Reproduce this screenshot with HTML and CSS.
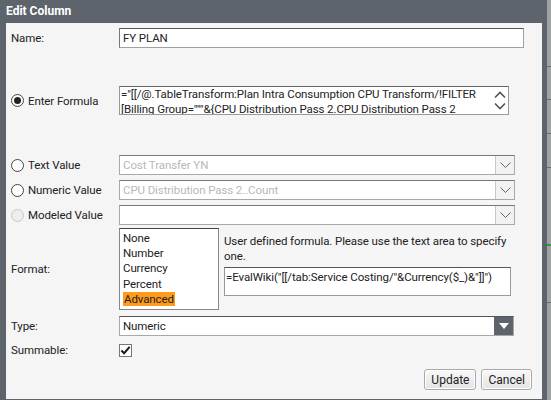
FILE: index.html
```html
<!DOCTYPE html>
<html>
<head>
<meta name="viewport" content="width=device-width, initial-scale=1.0">
<link rel="stylesheet" href="styles.css">
</head>
<body>
<div class="screen">
  <!-- VENTANA EDITAR COLUMNA -->
  <div class="dialog">
    <div class="dialog-title">Edit Column</div>
    <div class="dialog-body">

      <div class="row row-name">
        <span class="label">Name:</span>
        <div class="field field-name">FY PLAN</div>
      </div>

      <div class="row row-formula">
        <span class="label"><span class="radio checked"></span>Enter Formula</span>
        <div class="field field-area">
          <div class="area-text">="[[/@.TableTransform:Plan Intra Consumption CPU Transform/!FILTER<br>[Billing Group="""&amp;{CPU Distribution Pass 2.CPU Distribution Pass 2</div>
          <div class="area-scroll">
            <svg width="12" height="8" viewBox="0 0 12 8"><path d="M1 6.5 L6 1.5 L11 6.5" fill="none" stroke="#555" stroke-width="1.6"/></svg>
            <svg width="12" height="8" viewBox="0 0 12 8"><path d="M1 1.5 L6 6.5 L11 1.5" fill="none" stroke="#555" stroke-width="1.6"/></svg>
          </div>
        </div>
      </div>

      <div class="row row-text">
        <span class="label"><span class="radio"></span>Text Value</span>
        <div class="field field-select">
          <span class="select-text muted">Cost Transfer YN</span>
          <span class="select-arrow"><svg width="11" height="6" viewBox="0 0 11 6"><path d="M0.5 0.5 L5.5 5.5 L10.5 0.5" fill="none" stroke="#666" stroke-width="1"/></svg></span>
        </div>
      </div>

      <div class="row row-sel">
        <span class="label"><span class="radio"></span>Numeric Value</span>
        <div class="field field-select">
          <span class="select-text muted">CPU Distribution Pass 2..Count</span>
          <span class="select-arrow"><svg width="11" height="6" viewBox="0 0 11 6"><path d="M0.5 0.5 L5.5 5.5 L10.5 0.5" fill="none" stroke="#666" stroke-width="1"/></svg></span>
        </div>
      </div>

      <div class="row row-sel">
        <span class="label"><span class="radio disabled"></span>Modeled Value</span>
        <div class="field field-select">
          <span class="select-text"></span>
          <span class="select-arrow"><svg width="11" height="6" viewBox="0 0 11 6"><path d="M0.5 0.5 L5.5 5.5 L10.5 0.5" fill="none" stroke="#666" stroke-width="1"/></svg></span>
        </div>
      </div>

      <div class="row row-format">
        <span class="label">Format:</span>
        <div class="format-list">
          <div class="opt">None</div>
          <div class="opt">Number</div>
          <div class="opt">Currency</div>
          <div class="opt">Percent</div>
          <div class="opt"><span class="opt-sel">Advanced</span></div>
        </div>
        <div class="format-custom">
          <p class="hint">User defined formula. Please use the text area to specify<br>one.</p>
          <div class="field field-custom">=EvalWiki("[[/tab:Service Costing/"&amp;Currency($_)&amp;"]]")</div>
        </div>
      </div>

      <div class="row row-type">
        <span class="label">Type:</span>
        <div class="field field-select field-type">
          <span class="select-text">Numeric</span>
          <span class="select-arrow dark"><svg width="10" height="6" viewBox="0 0 10 6"><path d="M0 0 L10 0 L5 6 Z" fill="#fff"/></svg></span>
        </div>
      </div>

      <div class="row row-check">
        <span class="label">Summable:</span>
        <span class="checkbox"><svg width="12" height="11" viewBox="0 0 12 11"><path d="M1.5 5.5 L4.5 8.5 L10.5 1.5" fill="none" stroke="#1a1a1a" stroke-width="2.2"/></svg></span>
      </div>

      <div class="buttons">
        <button class="btn">Update</button>
        <button class="btn">Cancel</button>
      </div>

    </div>
  </div>
  <!-- pagina detras de la ventana -->
  <div class="backdrop">
    <div class="bd-line" style="top:66px"></div>
    <div class="bd-line" style="top:99px"></div>
    <div class="bd-line" style="top:133px"></div>
    <div class="bd-line" style="top:167px"></div>
    <div class="bd-line green" style="top:244px"></div>
    <div class="bd-line" style="top:302px"></div>
  </div>
</div>
</body>
</html>
```

FILE: styles.css
```css
* {
  box-sizing: border-box;
}

body {
  margin: 0;
  font-family: Roboto, "Noto Sans", sans-serif;
  font-size: 11.5px;
  letter-spacing: -0.1px;
  color: #222;
  background: #9c9c9c;
}

.screen {
  display: flex;
  width: 551px;
  height: 400px;
  overflow: hidden;
}

/* marco de la ventana */
.dialog {
  width: 547px;
  height: 400px;
  background: #5d646c;
  padding: 0 5px 1px 6px;
  display: flex;
  flex-direction: column;
}

.dialog-title {
  height: 23px;
  line-height: 22px;
  color: #fff;
  font-weight: bold;
  font-size: 12px;
  letter-spacing: 0;
}

.dialog-body {
  flex: 1;
  background: #f5f5f5;
  padding: 5px 0 0 5px;
}

.row {
  display: flex;
  align-items: center;
}

.label {
  width: 108px;
  flex-shrink: 0;
  display: flex;
  align-items: center;
  white-space: nowrap;
}

.row-formula { margin-top: 38px; }
.row-text { margin-top: 40px; }
.row-sel { margin-top: 5px; }
.row-format { margin-top: 3px; align-items: stretch; }
.row-type { margin-top: 6px; }
.row-check { margin-top: 7px; }

/* radios */
.radio {
  width: 13px;
  height: 13px;
  border: 1px solid #444;
  border-radius: 50%;
  background: #fff;
  margin-right: 4px;
  position: relative;
}

.radio.checked::after {
  content: "";
  position: absolute;
  left: 2px;
  top: 2px;
  width: 7px;
  height: 7px;
  border-radius: 50%;
  background: #222;
}

.radio.disabled {
  border-color: #c8c8c8;
  background: #eee;
}

/* campos */
.field {
  background: #fff;
  border: 1px solid #a0a0a0;
  border-top-color: #555;
  border-left-color: #777;
}

.field-name {
  width: 405px;
  height: 20px;
  line-height: 18px;
  padding-left: 3px;
}

.field-area {
  width: 390px;
  height: 29px;
  display: flex;
  border-color: #999;
  border-top-color: #666;
}

.area-text {
  flex: 1;
  padding: 0 0 0 1px;
  line-height: 14.5px;
  white-space: nowrap;
  overflow: hidden;
}

.area-scroll {
  width: 17px;
  display: flex;
  flex-direction: column;
  align-items: center;
  justify-content: space-around;
  padding: 2px 0;
}

.field-select {
  width: 396px;
  height: 20px;
  display: flex;
  border-color: #a8a8a8;
  border-top-color: #777;
}

.select-text {
  flex: 1;
  line-height: 18px;
  padding-left: 3px;
  white-space: nowrap;
}

.muted {
  color: #b8b8b8;
}

.select-arrow {
  width: 19px;
  border-left: 1px solid #c8c8c8;
  background: #f2f2f2;
  display: flex;
  align-items: center;
  justify-content: center;
}

.select-arrow.dark {
  background: #5d646c;
  border-left: none;
}

.field-type {
  width: 395px;
  border-top-color: #555;
}

/* lista de formatos */
.format-list {
  width: 100px;
  height: 82px;
  background: #fff;
  border: 1px solid #888;
  border-top-color: #444;
  padding: 2px 0 0 3px;
}

.opt {
  height: 15.2px;
  line-height: 15.2px;
}

.opt-sel {
  background: #ff9a1a;
  padding: 0 1px;
}

.format-custom {
  width: 287px;
  margin-left: 5px;
}

.hint {
  margin: 6px 0 0 0;
  line-height: 15px;
  white-space: nowrap;
}

.field-custom {
  margin-top: 3px;
  height: 29px;
  padding: 2px 0 0 1px;
  white-space: nowrap;
  border-color: #999;
  border-top-color: #555;
}

/* casilla */
.checkbox {
  width: 13px;
  height: 13px;
  background: #fff;
  border: 1px solid #777;
  display: flex;
  align-items: center;
  justify-content: center;
}

.buttons {
  display: flex;
  justify-content: flex-end;
  gap: 5px;
  margin-top: 12px;
  padding-right: 10px;
}

.btn {
  font-family: inherit;
  font-size: 12px;
  color: #222;
  height: 21px;
  padding: 0 6px;
  border: 1px solid #a9a9a9;
  border-radius: 3px;
  background: linear-gradient(#f8f8f8, #e4e4e4);
  box-shadow: inset 0 0 0 1px #fff;
}

/* fondo de la pagina */
.backdrop {
  flex: 1;
  position: relative;
  background: #a2a2a2;
}

.bd-line {
  position: absolute;
  left: 0;
  right: 0;
  height: 1px;
  background: #6a6a6a;
}

.bd-line.green {
  height: 2px;
  background: #2a9a2a;
}
```
